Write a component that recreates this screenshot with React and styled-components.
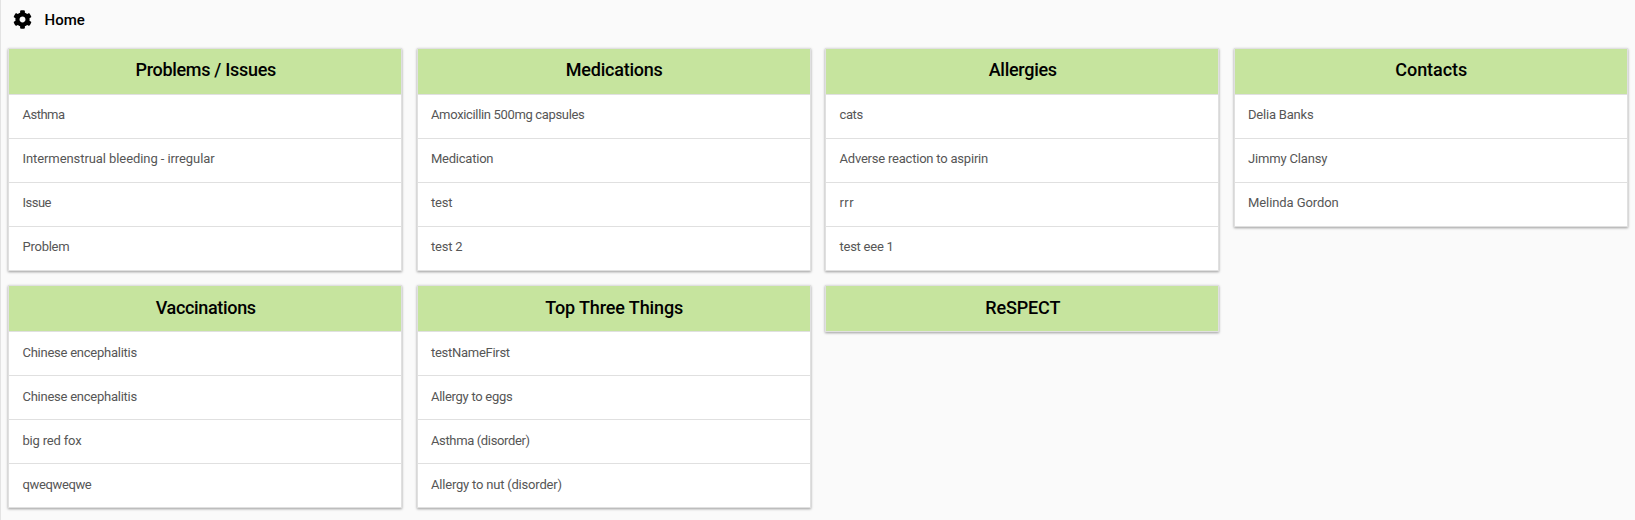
import React from "react";
import styled, { createGlobalStyle } from "styled-components";
import { FaCog } from "react-icons/fa";

const GlobalStyle = createGlobalStyle`
  *, *::before, *::after { box-sizing: border-box; }
  body {
    margin: 0;
    background: #fafafa;
    font-family: Roboto, "Liberation Sans", sans-serif;
  }
`;

const Page = styled.main`
  min-height: 100vh;
  border-left: 1px solid #e3e3e3;
`;

const TopBar = styled.header`
  display: flex;
  align-items: center;
  gap: 12.6px;
  height: 40px;
  padding-left: 12px;
  color: #000;

  svg {
    display: block;
    width: 19px;
    height: 19px;
    margin-top: -2px;
  }
`;

const PageTitle = styled.h1`
  margin: 0;
  font-size: 15px;
  font-weight: 500;
  line-height: 20px;
`;

const Grid = styled.div`
  display: grid;
  grid-template-columns: repeat(4, minmax(0, 1fr));
  align-items: start;
  gap: 14.4px 14.8px;
  padding: 7.6px 7.4px;
`;

const Card = styled.section`
  background: #fff;
  border: 1px solid #e0e0e0;
  box-shadow: 0 1px 3px rgba(0, 0, 0, 0.2), 0 1px 2px rgba(0, 0, 0, 0.2);
`;

const CardTitle = styled.h2`
  margin: 0;
  height: 45px;
  padding: 10.6px 0 0 1px;
  background: #c6e49e;
  color: #000;
  font-size: 18px;
  font-weight: 500;
  line-height: 22px;
  text-align: center;
  letter-spacing: ${(p) => p.$tracking}px;
`;

const List = styled.ul`
  list-style: none;
  margin: 0;
  padding: 0;
`;

const Item = styled.li`
  height: 44px;
  padding: 11.6px 14px 0 13.1px;
  border-top: 1px solid #e0e0e0;
  color: #565656;
  font-size: 13px;
  line-height: 18px;
  letter-spacing: ${(p) => p.$tracking}px;
`;

const cards = [
  { title: "Problems / Issues", tracking: -0.3, items: [["Asthma", -0.5], ["Intermenstrual bleeding - irregular", -0.08], ["Issue", -0.5], ["Problem", -0.25]] },
  { title: "Medications", tracking: -0.23, items: [["Amoxicillin 500mg capsules", -0.34], ["Medication", -0.23], ["test", -0.2], ["test 2", -0.2]] },
  { title: "Allergies", tracking: -0.28, items: [["cats", -0.4], ["Adverse reaction to aspirin", -0.21], ["rrr", 0.45], ["test eee 1", -0.24]] },
  { title: "Contacts", tracking: -0.05, items: [["Delia Banks", -0.2], ["Jimmy Clansy", -0.16], ["Melinda Gordon", -0.08]] },
  { title: "Vaccinations", tracking: -0.34, items: [["Chinese encephalitis", -0.25], ["Chinese encephalitis", -0.25], ["big red fox", -0.18], ["qweqweqwe", -0.36]] },
  { title: "Top Three Things", tracking: -0.12, items: [["testNameFirst", -0.28], ["Allergy to eggs", -0.28], ["Asthma (disorder)", -0.36], ["Allergy to nut (disorder)", -0.2]] },
  { title: "ReSPECT", tracking: -0.14, items: [] },
];

export default function App() {
  return (
    <Page>
      <GlobalStyle />
      <TopBar>
        <FaCog />
        <PageTitle>Home</PageTitle>
      </TopBar>
      <Grid>
        {cards.map((card) => (
          <Card key={card.title}>
            <CardTitle $tracking={card.tracking}>{card.title}</CardTitle>
            <List>
              {card.items.map(([text, tracking], i) => (
                <Item key={i} $tracking={tracking}>{text}</Item>
              ))}
            </List>
          </Card>
        ))}
      </Grid>
    </Page>
  );
}
